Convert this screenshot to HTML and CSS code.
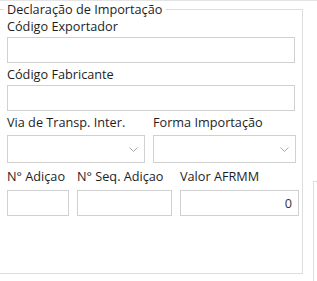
FILE: index.html
```html
<!DOCTYPE html>
<html lang="pt-BR">
<head>
    <meta charset="UTF-8">
    <meta name="viewport" content="width=device-width, initial-scale=1.0">
    <title>Declaração de Importação</title>
    <link rel="stylesheet" href="styles.css">
</head>
<body>
    <div class="panel">
        <fieldset class="group">
            <legend>Declaração de Importação</legend>

            <div class="field">
                <label for="exportador">Código Exportador</label>
                <input type="text" id="exportador" class="box box-wide">
            </div>

            <div class="field">
                <label for="fabricante">Código Fabricante</label>
                <input type="text" id="fabricante" class="box box-wide">
            </div>

            <div class="row">
                <div class="field">
                    <label>Via de Transp. Inter.</label>
                    <div class="combo combo-via">
                        <svg width="9" height="5" viewBox="0 0 9 5"><polyline points="0.5,0.5 4.5,4.5 8.5,0.5" fill="none" stroke="#a8a8a8" stroke-width="1"/></svg>
                    </div>
                </div>
                <div class="field">
                    <label>Forma Importação</label>
                    <div class="combo combo-forma">
                        <svg width="9" height="5" viewBox="0 0 9 5"><polyline points="0.5,0.5 4.5,4.5 8.5,0.5" fill="none" stroke="#a8a8a8" stroke-width="1"/></svg>
                    </div>
                </div>
            </div>

            <div class="row row-last">
                <div class="field">
                    <label for="adicao">N° Adiçao</label>
                    <input type="text" id="adicao" class="box box-adicao">
                </div>
                <div class="field">
                    <label for="seq">N° Seq. Adiçao</label>
                    <input type="text" id="seq" class="box box-seq">
                </div>
                <div class="field">
                    <label for="afrmm">Valor AFRMM</label>
                    <input type="text" id="afrmm" class="box box-valor" value="0">
                </div>
            </div>
        </fieldset>

        <div class="side"></div>
    </div>

    <div class="footer">Natureza da Operação &nbsp; Outras &nbsp; Estado da Entrada</div>
</body>
</html>
```

FILE: styles.css
```css
body {
    margin: 0;
    background: #fff;
    font-family: "Open Sans", "Noto Sans", sans-serif;
    font-size: 12.7px;
    color: #1e1e1e;
    overflow: hidden;
}
.panel {
    display: flex;
    border-top: 1px solid #e4e4e4;
}
.group {
    flex: none;
    width: 303px;
    box-sizing: border-box;
    height: 273px;
    margin: 0;
    padding: 1px 0 0 7px;
    border: 1px solid #dcdcdc;
    border-left: none;
    min-width: 0;
}
.group legend {
    padding: 0 4px 0 3px;
    margin-left: -3px;
    line-height: 16px;
}
.field label {
    display: block;
    line-height: 16px;
    white-space: nowrap;
}
.field {
    margin-bottom: 3px;
}
.box {
    display: block;
    box-sizing: border-box;
    height: 26px;
    margin: 3px 0 0;
    padding: 0 6px;
    border: 1px solid #d0d0d0;
    font: inherit;
    color: #333;
    background: #fff;
    outline: none;
}
.box-wide {
    width: 288px;
}
.row {
    display: flex;
    gap: 8px;
}
.combo {
    box-sizing: border-box;
    height: 28px;
    margin-top: 5px;
    border: 1px solid #d0d0d0;
    display: flex;
    align-items: center;
    justify-content: flex-end;
    padding-right: 6px;
}
.combo-via {
    width: 138px;
}
.combo-forma {
    width: 143px;
}
.row-last {
    margin-top: 2px;
}
.box-adicao {
    width: 62px;
    margin-top: 6px;
}
.box-seq {
    width: 95px;
    margin-top: 6px;
}
.box-valor {
    width: 119px;
    margin-top: 6px;
    text-align: right;
}
.side {
    flex: none;
    margin: 180px 0 0 10px;
    width: 3px;
    height: 100px;
    border-top: 1px solid #dcdcdc;
    border-left: 1px solid #dcdcdc;
}
.footer {
    padding: 3px 0 0 7px;
    line-height: 16px;
    color: #777;
    white-space: nowrap;
}
```
